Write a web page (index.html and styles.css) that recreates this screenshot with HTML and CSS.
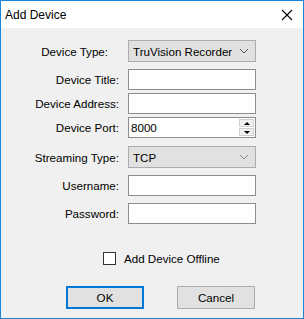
FILE: index.html
```html
<!DOCTYPE html>
<html lang="en">
<head>
    <meta charset="UTF-8">
    <meta name="viewport" content="width=device-width, initial-scale=1.0">
    <title>Add Device</title>
    <link rel="stylesheet" href="styles.css">
</head>
<body>
    <div class="window">
        <div class="title-bar">
            <span class="title">Add Device</span>
            <svg class="close" width="12" height="12" viewBox="0 0 12 12">
                <path d="M1 1 L11 11 M11 1 L1 11" stroke="#000" stroke-width="1.1" fill="none"/>
            </svg>
        </div>
        <div class="content">
            <div class="form">
                <div class="row">
                    <label class="label label-short">Device Type:</label>
                    <div class="select">
                        <span>TruVision Recorder</span>
                        <svg class="chevron" width="10" height="6" viewBox="0 0 10 6">
                            <path d="M1 1 L5 5 L9 1" stroke="#555" stroke-width="1" fill="none"/>
                        </svg>
                    </div>
                </div>
                <div class="row">
                    <label class="label">Device Title:</label>
                    <div class="input"></div>
                </div>
                <div class="row tight">
                    <label class="label">Device Address:</label>
                    <div class="input"></div>
                </div>
                <div class="row tight">
                    <label class="label">Device Port:</label>
                    <div class="input spin">
                        <span>8000</span>
                        <div class="spin-buttons">
                            <div class="spin-btn"><span class="arrow-up"></span></div>
                            <div class="spin-btn"><span class="arrow-down"></span></div>
                        </div>
                    </div>
                </div>
                <div class="row wide">
                    <label class="label">Streaming Type:</label>
                    <div class="select">
                        <span>TCP</span>
                        <svg class="chevron" width="10" height="6" viewBox="0 0 10 6">
                            <path d="M1 1 L5 5 L9 1" stroke="#888" stroke-width="1" fill="none"/>
                        </svg>
                    </div>
                </div>
                <div class="row">
                    <label class="label">Username:</label>
                    <div class="input"></div>
                </div>
                <div class="row">
                    <label class="label">Password:</label>
                    <div class="input"></div>
                </div>
            </div>
            <div class="check-row">
                <span class="checkbox"></span>
                <span>Add Device Offline</span>
            </div>
            <div class="buttons">
                <div class="button default">OK</div>
                <div class="button">Cancel</div>
            </div>
        </div>
    </div>
</body>
</html>
```

FILE: styles.css
```css
body {
    margin: 0;
    font-family: "Liberation Sans", Arial, sans-serif;
    font-size: 12px;
    color: #000;
    background: #fff;
}
.window {
    width: 304px;
    height: 319px;
    box-sizing: border-box;
    border: 1px solid #1a85d9;
    display: flex;
    flex-direction: column;
}
.title-bar {
    height: 27px;
    background: #fff;
    display: flex;
    align-items: center;
    justify-content: space-between;
    padding: 0 10px 0 4px;
}
.title {
    font-size: 12px;
    margin-top: 1px;
}
.close {
    margin-top: 1px;
}
.content {
    flex: 1;
    background: #f0f0f0;
    padding-top: 12px;
    font-size: 11.6px;
}
.form {
    display: flex;
    flex-direction: column;
}
.row {
    display: flex;
    align-items: center;
    margin-top: 7px;
}
.row:first-child {
    margin-top: 0;
}
.row.tight {
    margin-top: 3px;
}
.row.wide {
    margin-top: 8px;
}
.label {
    width: 118px;
    text-align: right;
    margin-right: 9px;
    box-sizing: border-box;
}
.label-short {
    padding-right: 11px;
}
.input {
    width: 128px;
    height: 21px;
    box-sizing: border-box;
    border: 1px solid #8c8c8c;
    background: #fff;
    display: flex;
    align-items: center;
    padding-left: 2px;
}
.select {
    width: 128px;
    height: 22px;
    box-sizing: border-box;
    border: 1px solid #adadad;
    background: #e1e1e1;
    display: flex;
    align-items: center;
    justify-content: space-between;
    padding: 0 6px 0 4px;
}
.spin {
    justify-content: space-between;
    padding-right: 1px;
}
.spin-buttons {
    width: 15px;
    height: 17px;
    display: flex;
    flex-direction: column;
    gap: 1px;
}
.spin-btn {
    flex: 1;
    background: #f0f0f0;
    border: 1px solid #d0d0d0;
    display: flex;
    align-items: center;
    justify-content: center;
}
.arrow-up {
    border-left: 3px solid transparent;
    border-right: 3px solid transparent;
    border-bottom: 3px solid #000;
}
.arrow-down {
    border-left: 3px solid transparent;
    border-right: 3px solid transparent;
    border-top: 3px solid #000;
}
.check-row {
    display: flex;
    align-items: center;
    gap: 8px;
    padding-left: 102px;
    margin-top: 28px;
}
.checkbox {
    width: 13px;
    height: 13px;
    box-sizing: border-box;
    border: 1px solid #333;
    background: #fff;
}
.buttons {
    display: flex;
    gap: 33px;
    padding-left: 65px;
    margin-top: 21px;
}
.button {
    width: 78px;
    height: 23px;
    box-sizing: border-box;
    border: 1px solid #adadad;
    background: #e1e1e1;
    display: flex;
    align-items: center;
    justify-content: center;
}
.button.default {
    border: 2px solid #0078d7;
}
```
